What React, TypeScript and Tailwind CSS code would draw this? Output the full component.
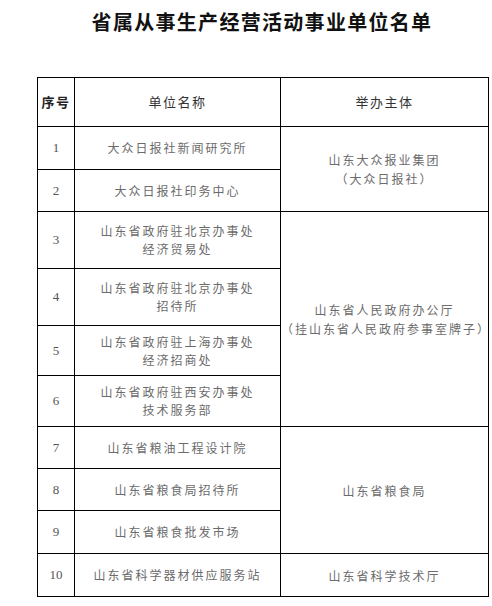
const rows: { no: string; name: string[] }[] = [
  { no: '1', name: ['大众日报社新闻研究所'] },
  { no: '2', name: ['大众日报社印务中心'] },
  { no: '3', name: ['山东省政府驻北京办事处', '经济贸易处'] },
  { no: '4', name: ['山东省政府驻北京办事处', '招待所'] },
  { no: '5', name: ['山东省政府驻上海办事处', '经济招商处'] },
  { no: '6', name: ['山东省政府驻西安办事处', '技术服务部'] },
  { no: '7', name: ['山东省粮油工程设计院'] },
  { no: '8', name: ['山东省粮食局招待所'] },
  { no: '9', name: ['山东省粮食批发市场'] },
  { no: '10', name: ['山东省科学器材供应服务站'] },
];

const heights = ['h-[43px]', 'h-[42px]', 'h-[57px]', 'h-[57px]', 'h-[50px]', 'h-[51px]', 'h-[42px]', 'h-[42px]', 'h-[43px]', 'h-[43px]'];

// 举办主体 merged cells, keyed by first row index
const owners: Record<number, { span: number; lines: string[] }> = {
  0: { span: 2, lines: ['山东大众报业集团', '（大众日报社）'] },
  2: { span: 4, lines: ['山东省人民政府办公厅', '（挂山东省人民政府参事室牌子）'] },
  6: { span: 3, lines: ['山东省粮食局'] },
  9: { span: 1, lines: ['山东省科学技术厅'] },
};

const cjk = "font-['Noto_Sans_CJK_SC',sans-serif]";

export default function App() {
  return (
    <div className={`w-[492px] h-[606px] bg-white pl-[37px] pr-[5px] ${cjk}`}>
      <h1 className="pt-[9px] h-[77px] text-center text-[20px] leading-[26px] font-bold tracking-[1.3px] text-[#111]">
        省属从事生产经营活动事业单位名单
      </h1>
      <table className="w-[451px] border-collapse table-fixed">
        <colgroup>
          <col className="w-[37px]" />
          <col className="w-[206px]" />
          <col className="w-[208px]" />
        </colgroup>
        <thead>
          <tr className="h-[49px]">
            <th className="border border-black text-[13px] font-semibold tracking-[1.5px] text-[#222]">序号</th>
            <th className="border border-black text-[13px] font-normal tracking-[1.5px] text-[#333]">单位名称</th>
            <th className="border border-black text-[13px] font-normal tracking-[1.5px] text-[#333]">举办主体</th>
          </tr>
        </thead>
        <tbody>
          {rows.map((r, i) => (
            <tr key={r.no} className={heights[i]}>
              <td className="border border-black text-center text-[13px] text-[#555] font-['Liberation_Serif',serif]">
                {r.no}
              </td>
              <td className="border border-black text-center text-[12px] leading-[18px] tracking-[2px] text-[#6b6b6b]">
                {r.name.map((l) => (
                  <div key={l}>{l}</div>
                ))}
              </td>
              {owners[i] && (
                <td
                  rowSpan={owners[i].span}
                  className="border border-black text-center text-[12px] leading-[19px] tracking-[2px] text-[#6b6b6b]"
                >
                  {owners[i].lines.map((l) => (
                    <div key={l} className="whitespace-nowrap">{l}</div>
                  ))}
                </td>
              )}
            </tr>
          ))}
        </tbody>
      </table>
    </div>
  );
}
